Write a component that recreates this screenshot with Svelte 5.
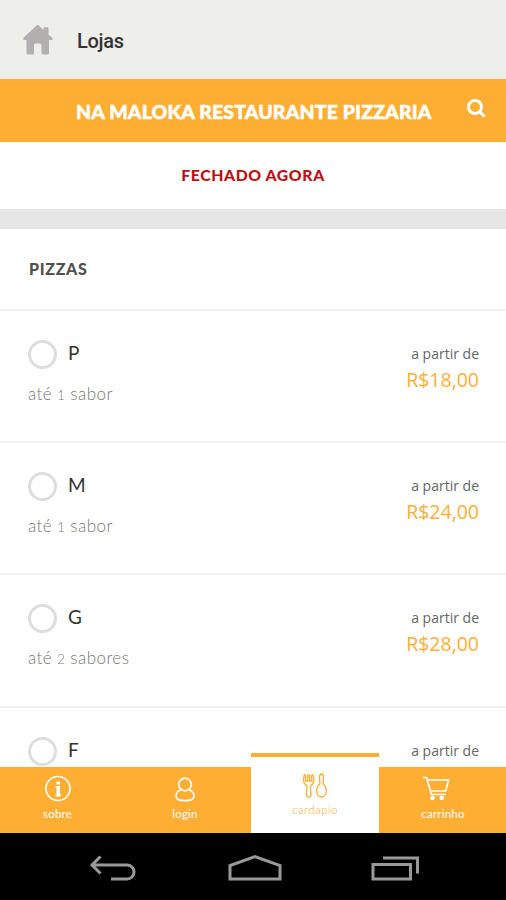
<script lang="ts">
  interface Size {
    name: string;
    hint?: [string, string, string];
    price?: string;
  }

  const sizes: Size[] = [
    { name: "P", hint: ["até ", "1", " sabor"], price: "R$18,00" },
    { name: "M", hint: ["até ", "1", " sabor"], price: "R$24,00" },
    { name: "G", hint: ["até ", "2", " sabores"], price: "R$28,00" },
    { name: "F" },
  ];

  const tabs = ["sobre", "login", "cardapio", "carrinho"];

  let selected = $state("");
  let activeTab = $state("cardapio");
</script>

<div class="screen">
  <header class="topbar">
    <svg class="home" width="30" height="30" viewBox="0 0 30 30">
      <path d="M14.8 0q-.8 0-1.500.7L.5 12.800Q-.6 15 1.800 15H3.500V28q0 1.500 1.500 1.500h4.500q1.500 0 1.500-1.500V20q0-1.500 1.500-1.500h4.500q1.500 0 1.500 1.500v8q0 1.500 1.500 1.500h4.500q1.500 0 1.500-1.500V15h2.200q2.400-.3 1-2.200L25.500 9.500V3.500q0-1.200-1.200-1.200h-2.500q-1.200 0-1.200 1.200v1.700L16.300.7Q15.600 0 14.800 0Z" />
    </svg>
    <span class="topbar-title">Lojas</span>
  </header>

  <div class="store">
    <h1>NA MALOKA RESTAURANTE PIZZARIA</h1>
    <button class="search" aria-label="buscar">
      <svg width="19" height="19" viewBox="0 0 19 19">
        <circle cx="8" cy="8" r="6.500" />
        <path d="m12.700 12.700 5 5" />
      </svg>
    </button>
  </div>

  <div class="status">FECHADO AGORA</div>

  <main>
    <h2>PIZZAS</h2>
    {#each sizes as size}
      <button class="row" onclick={() => (selected = size.name)}>
        <span class="info">
          <span class="choice">
            <span class="radio" class:checked={selected === size.name}></span>
            <span class="name">{size.name}</span>
          </span>
          {#if size.hint}
            <span class="hint">{size.hint[0]}<span class="count">{size.hint[1]}</span>{size.hint[2]}</span>
          {/if}
        </span>
        <span class="cost">
          <span class="from">a partir de</span>
          {#if size.price}
            <span class="price">{size.price}</span>
          {/if}
        </span>
      </button>
    {/each}
  </main>

  <nav class="tabs">
    {#each tabs as tab}
      <button class="tab {tab}" class:active={activeTab === tab} onclick={() => (activeTab = tab)}>
        {#if tab === "sobre"}
          <svg width="28" height="28" viewBox="0 0 28 28">
            <circle cx="14" cy="13.500" r="12" />
            <path class="solid" d="M12.500 6.500h3.500v3h-3.500ZM11.500 11h4.500v8.500h1v2h-5.500v-2h1v-6.500h-1Z" />
          </svg>
        {:else if tab === "login"}
          <svg width="28" height="28" viewBox="0 0 28 28">
            <circle cx="14" cy="9.500" r="6.300" />
            <path d="M10 14.800C6.500 16 5 18.300 5 21c0 3 3 4.700 9 4.700s9-1.700 9-4.700c0-2.700-1.500-5-5-6.200" />
          </svg>
        {:else if tab === "cardapio"}
          <svg width="28" height="28" viewBox="0 0 28 28">
            <path d="M3 4.500Q2.200 9.500 3 11.500q.7 2 3 3.300l-.6 8.700q.2 2.700 2.300 2.700T10 23.500l-.6-8.700q2.300-1.300 3-3.300.8-2 0-7-.8-1.800-1.700 0v5.500H8.600V4.500q-.9-1.800-1.800 0v5.500H4.700V4.500Q3.800 2.700 3 4.500Z" />
            <path d="M20.500 3q-2 .2-2 3l.4 7q-3.100 2.500-3.200 6-.1 7 4.800 7t4.800-7q-.1-3.500-3.200-6l.4-7q0-2.800-2-3Z" />
          </svg>
        {:else}
          <svg width="28" height="28" viewBox="0 0 28 28">
            <path d="M1 2.500h3.500L9.500 19.500H24M5.200 5h21.300l-2.700 11H8.500" />
            <circle class="solid" cx="10.500" cy="23" r="2.300" />
            <circle class="solid" cx="19.700" cy="23" r="2.300" />
          </svg>
        {/if}
        <span>{tab}</span>
      </button>
    {/each}
  </nav>

  <footer class="system">
    <svg width="52" height="30" viewBox="0 0 52 30">
      <path d="M12.500 2.500 4 11l8.500 8.500M4 11h35a7 7 0 0 1 0 14H23" />
    </svg>
    <svg width="54" height="30" viewBox="0 0 54 30">
      <path d="M2 25V11.500L27 2.500l25 9V25Z" />
    </svg>
    <svg width="52" height="30" viewBox="0 0 52 30">
      <path d="M3 10.500h37.500V25H3ZM13 4h34.500v15.500" />
    </svg>
  </footer>
</div>

<style>
:global(body) {
  margin: 0;
}

.screen {
  display: flex;
  flex-direction: column;
  width: 506px;
  height: 900px;
  overflow: hidden;
  background: #fff;
  font-family: Lato, "Open Sans", sans-serif;
}

button {
  border: none;
  padding: 0;
  background: none;
  font: inherit;
  color: inherit;
}

svg {
  display: block;
  fill: none;
}

.topbar {
  display: flex;
  align-items: center;
  gap: 24px;
  box-sizing: border-box;
  height: 79px;
  flex: none;
  padding: 0 23px;
  background: #eeeeea;
}

.home {
  fill: #b3afae;
}

.topbar-title {
  padding-top: 3px;
  font-family: Roboto, sans-serif;
  font-size: 20px;
  font-weight: 500;
  letter-spacing: -0.3px;
  color: #333;
}

.store {
  display: flex;
  align-items: center;
  justify-content: space-between;
  box-sizing: border-box;
  height: 63px;
  flex: none;
  padding: 0 20px 0 76px;
  background: #ffae34;
  color: #fff;
}

h1 {
  margin: 2px 0 0;
  font-size: 19.5px;
  font-weight: 900;
  letter-spacing: 0.14px;
  white-space: nowrap;
  -webkit-text-stroke: 0.5px #fff;
}

.search {
  margin-bottom: 5px;
}

.search svg {
  stroke: #fff;
  stroke-width: 3;
}

.status {
  box-sizing: border-box;
  height: 87px;
  flex: none;
  border-bottom: 20px solid #e6e6e6;
  line-height: 65px;
  text-align: center;
  font-size: 15.8px;
  font-weight: 900;
  letter-spacing: 0.6px;
  color: #bd0e12;
}

main {
  flex: 1;
  min-height: 0;
  overflow: hidden;
}

h2 {
  box-sizing: border-box;
  height: 82px;
  margin: 0;
  padding-left: 29px;
  border-bottom: 2px solid #f0f0f0;
  line-height: 80px;
  font-size: 16px;
  font-weight: 900;
  letter-spacing: 0.7px;
  color: #505050;
}

.row {
  display: flex;
  justify-content: space-between;
  align-items: flex-start;
  box-sizing: border-box;
  width: 100%;
  height: 132.2px;
  padding: 29px 27px 0 28px;
  border-bottom: 2px solid #f1f1f1;
  text-align: left;
}

.info,
.cost {
  display: flex;
  flex-direction: column;
}

.choice {
  display: flex;
  gap: 11px;
}

.radio {
  box-sizing: border-box;
  width: 29px;
  height: 29px;
  border: 3px solid #ddd;
  border-radius: 50%;
}

.radio.checked {
  border-color: #ffae34;
}

.name {
  line-height: 25px;
  font-size: 19px;
  color: #333;
}

.hint {
  margin-top: 13px;
  line-height: 23px;
  font-size: 17px;
  font-weight: 300;
  letter-spacing: 0.45px;
  color: #777;
}

/* old-style figure, as tall as the lowercase letters */
.count {
  font-size: 13px;
}

.cost {
  align-items: flex-end;
  font-family: "Open Sans", sans-serif;
}

.from {
  margin-top: 4px;
  line-height: 20px;
  font-size: 14px;
  color: #666;
}

.price {
  margin-top: 3px;
  line-height: 26px;
  font-size: 19.5px;
  color: #ffae34;
}

.tabs {
  display: flex;
  height: 66px;
  flex: none;
  margin: 0 -1px 0 -5px;
  background: #ffae34;
}

.tab {
  display: flex;
  flex-direction: column;
  align-items: center;
  box-sizing: border-box;
  width: 128px;
  height: 66px;
  padding-top: 8px;
  font-size: 11.5px;
  line-height: 14px;
  color: #fff;
}

.tab svg {
  stroke: currentColor;
  stroke-width: 1.7;
}

.tab .solid {
  fill: currentColor;
  stroke: none;
}

.tab span {
  margin-top: 4px;
  letter-spacing: 0.2px;
}

.sobre {
  padding-right: 3px;
}

.login {
  padding-right: 4px;
}

.carrinho svg {
  margin-left: -14px;
}

/* the open tab rises above the bar */
.tab.active {
  height: 80px;
  margin-top: -14px;
  padding-top: 14px;
  border-top: 4px solid #ffae34;
  background: #fff;
  color: #ffae34;
}

.tab.active svg {
  stroke-width: 1.3;
}

.tab.active span {
  font-weight: 300;
  letter-spacing: 0.5px;
}

.system {
  display: flex;
  align-items: center;
  justify-content: center;
  gap: 88px;
  box-sizing: border-box;
  height: 67px;
  flex: none;
  padding: 4px 0 0 3px;
  background: #000;
}

.system svg {
  stroke: #999;
  stroke-width: 3;
}
</style>
